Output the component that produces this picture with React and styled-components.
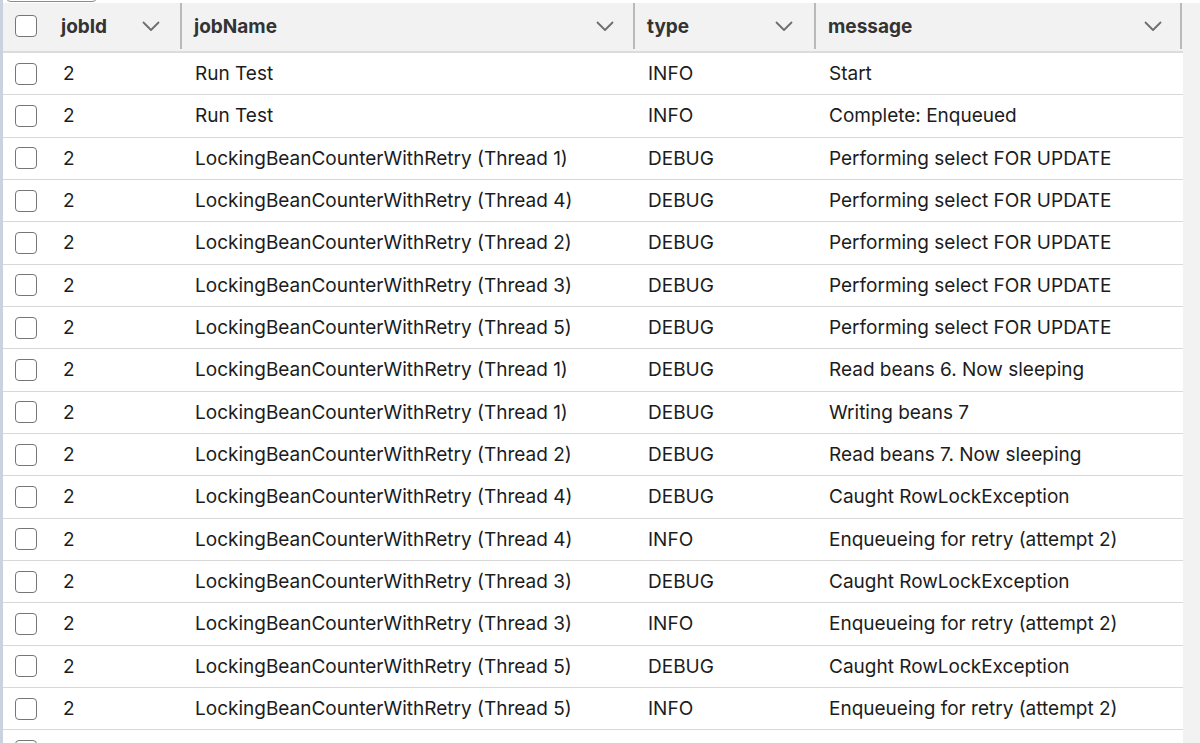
import React from 'react';
import styled, { createGlobalStyle } from 'styled-components';

const GlobalStyle = createGlobalStyle`
  html, body { margin: 0; padding: 0; background: #ffffff; }
  body { font-family: Inter, "Liberation Sans", Arial, sans-serif; overflow: hidden; }
`;

const Frame = styled.div`
  display: flex;
  width: 1200px;
  height: 743px;
  overflow: hidden;
  border-left: 3px solid #c9d2de;
  box-sizing: border-box;
`;

const Main = styled.div`
  flex: 1;
  display: flex;
  flex-direction: column;
  min-width: 0;
`;

const Gutter = styled.div`
  width: 17px;
  background: #f2f2f2;
  margin-top: 3px;
`;

const TopStrip = styled.div`
  flex: none;
  height: 3px;
  overflow: hidden;
  background: #ffffff;
  display: flex;
  padding-left: 2px;
`;

const ToolButton = styled.div`
  width: 93px;
  height: 20px;
  margin-top: -18px;
  border: 1px solid #8a8a8a;
  border-radius: 6px;
  box-sizing: border-box;
`;

const cols = '179px 453px 181px 366px';

const HeaderRow = styled.div`
  flex: none;
  display: grid;
  grid-template-columns: ${cols};
  height: 48px;
  background: #f2f2f2;
  border-bottom: 2px solid #dcdcdc;
`;

const HeadCell = styled.div`
  display: flex;
  align-items: center;
  padding-left: ${p => p.$pad}px;
  padding-right: ${p => p.$right}px;
  border-right: 2px solid #b9b9b9;
  margin-bottom: 2px;
  font-weight: 700;
  font-size: 19px;
  color: #333333;
  box-sizing: border-box;
`;

const HeadLabel = styled.span`
  flex: 1;
`;

const Chevron = () => (
  <svg width="18" height="11" viewBox="0 0 18 11">
    <path d="M1.5 1.5 L9 9 L16.5 1.5" fill="none" stroke="#6e6e6e" strokeWidth="1.8" strokeLinecap="round" strokeLinejoin="round" />
  </svg>
);

const Box = styled.span`
  width: 22px;
  height: 22px;
  border: 1.5px solid #767676;
  border-radius: 4px;
  box-sizing: border-box;
  background: #ffffff;
  margin-right: ${p => p.$gap}px;
  flex: none;
`;

const Row = styled.div`
  flex: none;
  display: grid;
  grid-template-columns: ${cols};
  height: 42.33px;
  border-bottom: 1.5px solid #d8d8d8;
  box-sizing: border-box;
  font-size: 19px;
  color: #1c1c1c;
`;

const Cell = styled.div`
  display: flex;
  align-items: center;
  padding-left: ${p => p.$pad}px;
  white-space: nowrap;
  overflow: hidden;
`;

const rows = [
  ['Run Test', 'INFO', 'Start'],
  ['Run Test', 'INFO', 'Complete: Enqueued'],
  ['LockingBeanCounterWithRetry (Thread 1)', 'DEBUG', 'Performing select FOR UPDATE'],
  ['LockingBeanCounterWithRetry (Thread 4)', 'DEBUG', 'Performing select FOR UPDATE'],
  ['LockingBeanCounterWithRetry (Thread 2)', 'DEBUG', 'Performing select FOR UPDATE'],
  ['LockingBeanCounterWithRetry (Thread 3)', 'DEBUG', 'Performing select FOR UPDATE'],
  ['LockingBeanCounterWithRetry (Thread 5)', 'DEBUG', 'Performing select FOR UPDATE'],
  ['LockingBeanCounterWithRetry (Thread 1)', 'DEBUG', 'Read beans 6. Now sleeping'],
  ['LockingBeanCounterWithRetry (Thread 1)', 'DEBUG', 'Writing beans 7'],
  ['LockingBeanCounterWithRetry (Thread 2)', 'DEBUG', 'Read beans 7. Now sleeping'],
  ['LockingBeanCounterWithRetry (Thread 4)', 'DEBUG', 'Caught RowLockException'],
  ['LockingBeanCounterWithRetry (Thread 4)', 'INFO', 'Enqueueing for retry (attempt 2)'],
  ['LockingBeanCounterWithRetry (Thread 3)', 'DEBUG', 'Caught RowLockException'],
  ['LockingBeanCounterWithRetry (Thread 3)', 'INFO', 'Enqueueing for retry (attempt 2)'],
  ['LockingBeanCounterWithRetry (Thread 5)', 'DEBUG', 'Caught RowLockException'],
  ['LockingBeanCounterWithRetry (Thread 5)', 'INFO', 'Enqueueing for retry (attempt 2)'],
];

export default function App() {
  return (
    <>
      <GlobalStyle />
      <Frame>
        <Main>
          <TopStrip><ToolButton /></TopStrip>
          <HeaderRow>
            <HeadCell $pad={12} $right={20}>
              <Box $gap={24} />
              <HeadLabel>jobId</HeadLabel>
              <Chevron />
            </HeadCell>
            <HeadCell $pad={12} $right={19}>
              <HeadLabel>jobName</HeadLabel>
              <Chevron />
            </HeadCell>
            <HeadCell $pad={12} $right={21}>
              <HeadLabel>type</HeadLabel>
              <Chevron />
            </HeadCell>
            <HeadCell $pad={12} $right={18}>
              <HeadLabel>message</HeadLabel>
              <Chevron />
            </HeadCell>
          </HeaderRow>
          {rows.map((r, i) => (
            <Row key={i}>
              <Cell $pad={12}>
                <Box $gap={26} />
                2
              </Cell>
              <Cell $pad={13}>{r[0]}</Cell>
              <Cell $pad={13}>{r[1]}</Cell>
              <Cell $pad={13}>{r[2]}</Cell>
            </Row>
          ))}
          {/* next row, scrolled mostly out of view */}
          <Row>
            <Cell $pad={12}>
              <Box $gap={0} />
            </Cell>
          </Row>
        </Main>
        <Gutter />
      </Frame>
    </>
  );
}
